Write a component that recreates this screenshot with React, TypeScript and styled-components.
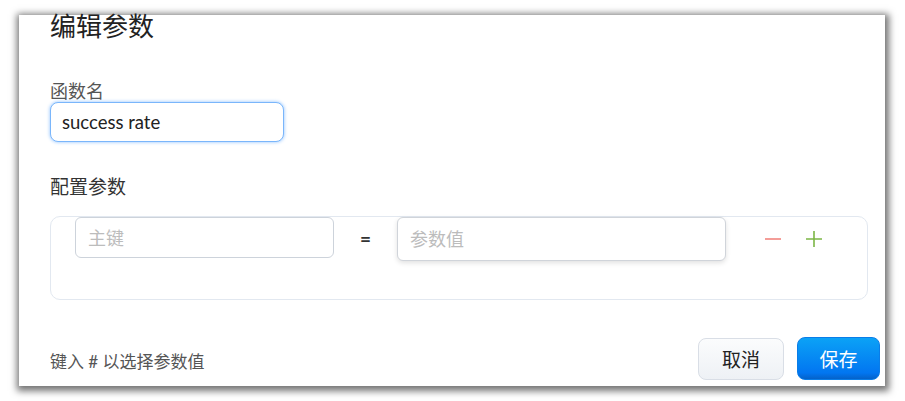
import React from "react";
import styled, { createGlobalStyle } from "styled-components";

const Global = createGlobalStyle`
  html, body { margin: 0; padding: 0; background: #ffffff; }
  body { font-family: Lato, "Noto Sans CJK SC", sans-serif; }
  * { box-sizing: border-box; }
`;

const Page = styled.div`
  width: 905px;
  height: 401px;
  padding: 15px 0 0 19px;
  overflow: hidden;
`;

const Panel = styled.div`
  width: 866px;
  height: 371px;
  background: #fff;
  box-shadow: 1px 2px 7px 3px rgba(0, 0, 0, 0.55);
  padding: 0 5px 0 31px;
  display: flex;
  flex-direction: column;
`;

const Title = styled.h1`
  margin: -1px 0 0;
  font: 400 26px/24px Lato, "Noto Sans CJK SC", sans-serif;
  color: #222;
`;

const Label = styled.div<{ $gap: number; $size: number }>`
  margin-top: ${(p) => p.$gap}px;
  font: 400 ${(p) => p.$size}px/20px Lato, "Noto Sans CJK SC", sans-serif;
  color: ${(p) => (p.$gap > 40 ? "#555" : "#333")};
`;

const NameInput = styled.input`
  margin-top: 1px;
  width: 234px;
  height: 40px;
  border: 1.5px solid #7ab6fb;
  border-radius: 8px;
  box-shadow: 0 0 3px 1px rgba(100, 170, 255, 0.45);
  padding: 0 11px;
  font: 400 18.5px Lato, "Noto Sans CJK SC", sans-serif;
  color: #222;
  outline: none;
  background: #fff;
`;

const ParamBox = styled.div`
  margin-top: 19px;
  margin-right: 12px;
  height: 84px;
  border: 1px solid #e2e8f0;
  border-radius: 10px;
  padding: 0 0 0 24px;
  display: flex;
  align-items: flex-start;
`;

const Field = styled.input<{ $w: number; $h: number; $raised?: boolean }>`
  width: ${(p) => p.$w}px;
  height: ${(p) => p.$h}px;
  border: 1px solid ${(p) => (p.$raised ? "#d0d4da" : "#cdd3db")};
  border-radius: 6px;
  padding: 0 12px;
  font: 400 18px Lato, "Noto Sans CJK SC", sans-serif;
  color: #333;
  background: #fff;
  outline: none;
  box-shadow: ${(p) => (p.$raised ? "0 2px 5px rgba(0,0,0,0.12)" : "none")};
  &::placeholder { color: #bcbcbc; }
`;

const Equals = styled.span`
  width: 63px;
  text-align: center;
  font: 700 19px/43px Lato, sans-serif;
  color: #333;
`;

const IconBtn = styled.button<{ $ml: number }>`
  margin-left: ${(p) => p.$ml}px;
  margin-top: 14px;
  width: 16px;
  height: 16px;
  padding: 0;
  border: none;
  background: none;
  display: flex;
  cursor: pointer;
`;

const Footer = styled.div`
  margin-top: 37px;
  display: flex;
  align-items: center;
`;

const Hint = styled.span`
  flex: 1;
  padding-top: 7px;
  font: 400 17px/20px Lato, "Noto Sans CJK SC", sans-serif;
  color: #555;
`;

const Button = styled.button<{ $primary?: boolean }>`
  width: ${(p) => (p.$primary ? 83 : 86)}px;
  height: ${(p) => (p.$primary ? 43 : 42)}px;
  margin-left: ${(p) => (p.$primary ? 13 : 0)}px;
  border-radius: 8px;
  font: 400 19px "Noto Sans CJK SC", sans-serif;
  cursor: pointer;
  border: 1px solid ${(p) => (p.$primary ? "#0a7de8" : "#d9dee6")};
  color: ${(p) => (p.$primary ? "#fff" : "#222")};
  background: ${(p) =>
    p.$primary
      ? "linear-gradient(#0ba2f6, #0276f1 85%, #0462c9)"
      : "linear-gradient(#fbfcfd, #eef1f5)"};
`;

export default function App() {
  return (
    <>
      <Global />
      <Page>
        <Panel>
          <Title>编辑参数</Title>
          <Label $gap={43} $size={18}>函数名</Label>
          <NameInput defaultValue="success rate" />
          <Label $gap={35} $size={19}>配置参数</Label>
          <ParamBox>
            <Field $w={259} $h={41} placeholder="主键" />
            <Equals>=</Equals>
            <Field $w={329} $h={44} $raised placeholder="参数值" />
            <IconBtn $ml={39} aria-label="remove">
              <svg width="16" height="16" viewBox="0 0 16 16">
                <path d="M0 8h16" stroke="#f2857f" strokeWidth="1.6" />
              </svg>
            </IconBtn>
            <IconBtn $ml={25} aria-label="add">
              <svg width="16" height="16" viewBox="0 0 16 16">
                <path d="M0 8h16M8 0v16" stroke="#7cb646" strokeWidth="1.6" />
              </svg>
            </IconBtn>
          </ParamBox>
          <Footer>
            <Hint>键入 # 以选择参数值</Hint>
            <Button>取消</Button>
            <Button $primary>保存</Button>
          </Footer>
        </Panel>
      </Page>
    </>
  );
}
